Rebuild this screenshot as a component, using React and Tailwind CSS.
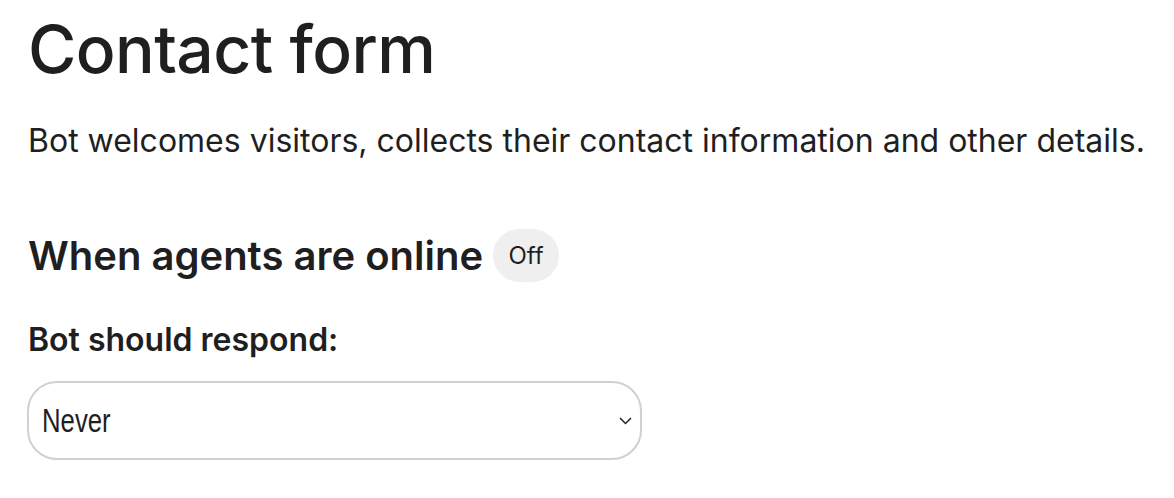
export default function App() {
  return (
    <div className="min-h-screen bg-white text-[#1f1f1f] pl-[28px] pt-[9px]" style={{ fontFamily: 'Inter, "Noto Sans", sans-serif' }}>
      <h1 className="text-[66px] leading-[80px] font-medium tracking-[-0.6px]">Contact form</h1>

      <p className="mt-[32px] text-[32px] leading-[40px]">
        Bot welcomes visitors, collects their contact information and other details.
      </p>

      <div className="mt-[68px] flex items-center gap-[10px]">
        <h2 className="text-[40px] leading-[48px] font-semibold">When agents are online</h2>
        <span className="h-[53px] w-[66px] flex items-center justify-center rounded-full bg-[#efefef] text-[24px]">Off</span>
      </div>

      <p className="mt-[38px] text-[32px] leading-[40px] font-semibold">Bot should respond:</p>

      <div className="mt-[21px] ml-[-1px] w-[615px] h-[79px] border-2 border-[#d0d0d0] rounded-[30px] flex items-center justify-between pl-[13px] pr-[8px]">
        <span className="inline-block origin-left scale-x-[0.78] text-[33px]" style={{ fontFamily: '"Liberation Sans", Arial, sans-serif' }}>Never</span>
        <svg width="13" height="8" viewBox="0 0 13 8" fill="none" stroke="#222" strokeWidth="1.5">
          <path d="M1 1l5.5 5.5L12 1" />
        </svg>
      </div>
    </div>
  );
}
